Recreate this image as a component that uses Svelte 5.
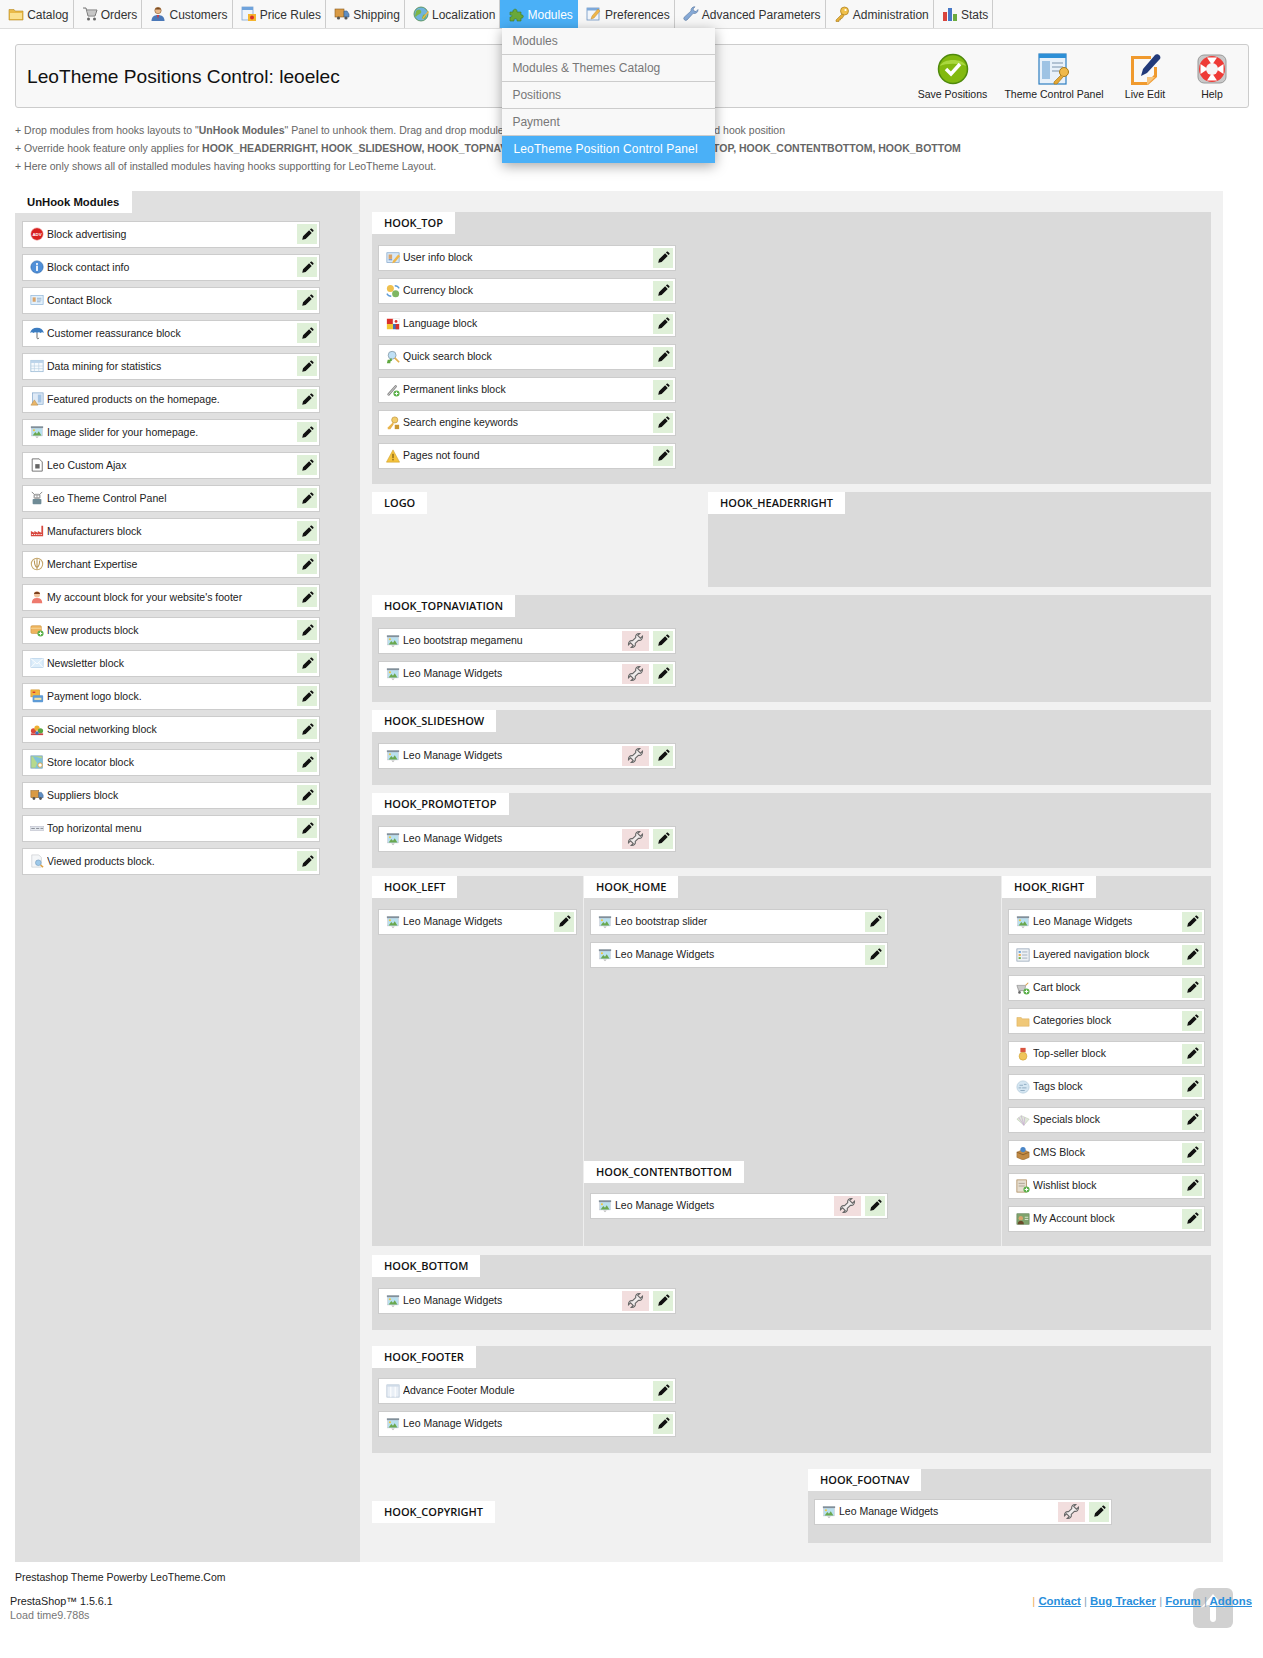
<script>
  const icons = {
    folder: '<path d="M1 3.500h5l1.200 1.500H15v9H1z" fill="#e9b949" stroke="#b98a22" stroke-width=".6"/><path d="M2 7h12v6H2z" fill="#fbe08f"/>',
    cart: '<path d="M1 2h3l2 8h7l2-6H5" fill="#e4e4e4" stroke="#777" stroke-width="1"/><path d="M6 6h8M6 8h7" stroke="#999" stroke-width=".8"/><circle cx="6.500" cy="13" r="1.500" fill="#666"/><circle cx="12.500" cy="13" r="1.500" fill="#666"/>',
    customer: '<circle cx="8" cy="4.500" r="3.200" fill="#e8b98c" stroke="#8a5a2c" stroke-width=".6"/><path d="M5 3.500c1-2.500 5-2.500 6 0z" fill="#7a4a20"/><path d="M1.500 15c0-4 2.500-6 6.500-6s6.500 2 6.500 6z" fill="#4a78b8"/><path d="M7 9h2l-1 4z" fill="#d33"/>',
    price: '<rect x="1" y="1" width="11" height="13" fill="#eef4fb" stroke="#7da3cf" stroke-width=".8"/><rect x="1" y="1" width="11" height="3" fill="#6fa3dc"/><rect x="7" y="8" width="8" height="7" fill="#f5b52e"/><circle cx="11" cy="11.500" r="2" fill="#d9302a"/>',
    truck: '<rect x="1" y="3" width="9" height="8" fill="#d89a45" stroke="#8a5a1c" stroke-width=".6"/><path d="M10 5h3l2 3v3h-5z" fill="#5f8fc4" stroke="#3c5f88" stroke-width=".6"/><circle cx="4.500" cy="12" r="1.600" fill="#555"/><circle cx="12" cy="12" r="1.600" fill="#555"/>',
    globe: '<circle cx="8" cy="8" r="7" fill="#6fb3dd" stroke="#4f8a46" stroke-width=".8"/><path d="M3 5c2-2 4-2 5 0s-1 3-3 4-2 3-3 1zM10 9c2-1 4 0 3 2s-3 3-4 1z" fill="#7db646"/><path d="M9 14l1-3 5-6 1 1-5 6z" fill="#eab64a"/>',
    puzzle: '<path d="M2 6h3c-1-3 4-4 4-1 0 .5 0 1 0 1h4v3c3-1 3 4 0 3v3H9c1-3-4-3-3 0H2v-4c2 1 3-3 0-2z" fill="#69a83a" stroke="#3f7a22" stroke-width=".6"/>',
    pref: '<rect x="1" y="2" width="12" height="12" fill="#f2f6fb" stroke="#6d95c4" stroke-width=".8"/><rect x="1" y="2" width="12" height="2.500" fill="#7ea9da"/><path d="M5 13l1-3 6-7 2 2-6 7z" fill="#efb64a" stroke="#b2802a" stroke-width=".4"/>',
    wrenchb: '<path d="M15 3.500a3.600 3.600 0 0 1-4.800 3.800L4 14a2 2 0 0 1-2.800-2.800L8 5A3.600 3.600 0 0 1 12 .8L10 3l1 2 2 .6z" fill="#86a9d6" stroke="#55759f" stroke-width=".6"/>',
    key: '<circle cx="10.500" cy="5" r="4" fill="#f0c04a" stroke="#a87a18" stroke-width=".7"/><circle cx="11.500" cy="4" r="1.100" fill="#fff"/><path d="M8 8l-6 6v1.500h3V14h1.500v-1.500H8l2-3z" fill="#e5b03a" stroke="#a87a18" stroke-width=".6"/>',
    stats: '<rect x="1" y="6" width="4" height="9" fill="#d9443c"/><rect x="6" y="2" width="4" height="13" fill="#4778c6"/><rect x="11" y="8" width="4" height="7" fill="#6cab3f"/>',
    adv: '<circle cx="8" cy="8" r="7" fill="#d8201f" stroke="#e7807f" stroke-width=".6"/><text x="8" y="10" font-size="5" font-family="Liberation Sans" font-weight="700" fill="#fff" text-anchor="middle">ADV</text>',
    info: '<circle cx="8" cy="8" r="7" fill="#4f8fd8" stroke="#2d68ad" stroke-width=".8"/><circle cx="8" cy="4.500" r="1.200" fill="#fff"/><rect x="7" y="6.500" width="2" height="6" fill="#fff"/>',
    contact: '<rect x="1" y="3" width="14" height="10" fill="#e3f0fb" stroke="#8cb4d8" stroke-width=".8"/><rect x="3" y="5" width="3.500" height="5" fill="#d9a36a"/><path d="M8 6h5M8 8h5M8 10h4" stroke="#7d9cbb" stroke-width=".8"/>',
    umbrella: '<path d="M0 8c1-4 4-6 8-6s7 2 8 6c-1-1-3-1-4 0-1-1-3-1-4 0-1-1-3-1-4 0-1-1-3-1-4 0z" fill="#3c7cc0"/><path d="M8 8v5.500c0 1.500 2 1.500 2 0" fill="none" stroke="#555" stroke-width="1"/>',
    table: '<rect x="1" y="1.500" width="14" height="13" fill="#f6fafd" stroke="#8fb2d0" stroke-width=".8"/><rect x="1" y="1.500" width="14" height="3" fill="#bcd4ea"/><path d="M1 8h14M1 11h14M5 4.500v10M10 4.500v10" stroke="#b7cfe3" stroke-width=".7"/>',
    featured: '<rect x="3" y="1" width="12" height="13" fill="#dfeaf6" stroke="#7ea3c9" stroke-width=".8"/><rect x="9" y="3" width="4" height="9" fill="#a5c4e4"/><path d="M1 15l4-6 4 6z" fill="#e9b66a" stroke="#b07f33" stroke-width=".5"/>',
    slider: '<rect x="1" y="1.500" width="14" height="2" fill="#7d8c96"/><rect x="2" y="3.500" width="12" height="9" fill="#b9e0ee" stroke="#aab" stroke-width=".4"/><path d="M3 12l3-4 2 2 2-3 3 5z" fill="#6aa84f"/><circle cx="4.500" cy="6" r="1.200" fill="#f2c53d"/><path d="M6 13h4l-2 2z" fill="#bbb"/>',
    ajax: '<path d="M2.500 1h8l3.500 3.500V15h-11.500z" fill="#fff" stroke="#555" stroke-width=".9"/><rect x="6" y="7" width="5" height="5" fill="#666"/>',
    robot: '<rect x="4" y="3" width="8" height="6" rx="2" fill="#aaa"/><path d="M2 1l3 3M14 1l-3 3" stroke="#777"/><rect x="3" y="9" width="10" height="6" rx="1" fill="#6f8b96"/><circle cx="6.500" cy="6" r="1" fill="#fff"/><circle cx="9.500" cy="6" r="1" fill="#fff"/>',
    factory: '<path d="M1 14V8l4 2V8l4 2V8l4 2V2h2v12z" fill="#d8483f"/><path d="M2 12h12" stroke="#fff" stroke-dasharray="1.500 1" stroke-width="1"/>',
    merchant: '<circle cx="8" cy="8" r="6.500" fill="none" stroke="#c5a76d" stroke-width="1.200"/><path d="M8 2v12M5 4c0 5 1 7 3 8 2-1 3-3 3-8" fill="none" stroke="#b89555" stroke-width="1.200"/>',
    girl: '<circle cx="8" cy="5" r="3.500" fill="#f0c49f"/><path d="M4.500 4.500C5 1 11 1 11.500 4.500z" fill="#7a3f1d"/><path d="M2 15c0-4 2-6 6-6s6 2 6 6z" fill="#ee7a6e"/>',
    newbox: '<rect x="1" y="3" width="12" height="9" rx="1.500" fill="#eeb45e" stroke="#c58c36" stroke-width=".6"/><path d="M1 6h12" stroke="#f9dc9e"/><circle cx="12" cy="12" r="3.500" fill="#5bb04a"/><path d="M10 12h4M12 10v4" stroke="#fff" stroke-width="1.100"/>',
    mail: '<rect x="1" y="3" width="14" height="10" fill="#dcedfa" stroke="#a9c9e5" stroke-width=".7"/><path d="M1 3l7 6 7-6M1 13l5-5M15 13l-5-5" fill="none" stroke="#fff" stroke-width="1"/>',
    payment: '<rect x="1" y="1" width="10" height="8" fill="#f3b63f" stroke="#c98d20" stroke-width=".6"/><rect x="3" y="3" width="3" height="1.500" fill="#d9302a"/><rect x="3" y="7" width="12" height="8" rx="1" fill="#5e9bd6"/><rect x="5" y="10" width="8" height="2.500" fill="#f2e2a5"/>',
    social: '<circle cx="4" cy="10" r="3" fill="#d9483b"/><circle cx="8" cy="7" r="3" fill="#eeb032"/><circle cx="12" cy="10" r="3" fill="#5aa640"/><path d="M1 14h14" stroke="#c44" stroke-width="2"/><circle cx="8" cy="12.500" r="2" fill="#3e74bc"/>',
    map: '<rect x="1" y="1" width="13" height="14" fill="#b6d98d" stroke="#6e98c2" stroke-width=".8"/><path d="M3 1l5 8-2 6h8V4z" fill="#7fc2da"/><circle cx="11.500" cy="11.500" r="2.500" fill="#fff" stroke="#e0a23c"/>',
    menu: '<rect x="0" y="6" width="16" height="5" fill="#e4e8ee" stroke="#aab" stroke-width=".5"/><path d="M1.500 8.500h4M7 8.500h3.500M12 8.500h3" stroke="#7a7f88" stroke-width="1"/>',
    viewed: '<path d="M2 1h8l3 3v11H2z" fill="#f4f6f8" stroke="#c3c7cc" stroke-width=".7"/><circle cx="9.500" cy="10" r="3.200" fill="#9dc9ea" stroke="#6e96b9" stroke-width=".7"/><path d="M12 12.500l3 2.500" stroke="#e0a23c" stroke-width="1.500"/>',
    user: '<rect x="1" y="2" width="14" height="11" fill="#d8e8f7" stroke="#7ea3c9" stroke-width=".8"/><rect x="3" y="4" width="4" height="5" fill="#d9a36a"/><path d="M3 10h4" stroke="#4a78b8"/><path d="M7 14l1-3 6-7 2 2-6 7z" fill="#efb64a"/>',
    currency: '<circle cx="5" cy="5" r="4" fill="#efc04e"/><circle cx="11" cy="11" r="4" fill="#7fb661"/><path d="M10 2c3 0 4 1 5 3M6 14c-3 0-4-1-5-3" fill="none" stroke="#5e9bd6" stroke-width="1.500"/>',
    lang: '<rect x="1" y="2" width="7" height="6" fill="#d9302a"/><rect x="8" y="2" width="7" height="6" fill="#fff" stroke="#ddd" stroke-width=".5"/><circle cx="11.500" cy="5" r="1.600" fill="#d9302a"/><rect x="1" y="8" width="7" height="6" fill="#f3c632"/><rect x="8" y="8" width="7" height="6" fill="#3e6fb5"/><rect x="11" y="8" width="4" height="6" fill="#d9302a"/>',
    search: '<circle cx="7" cy="6" r="4.500" fill="#bfe0f5" stroke="#8aa0ad" stroke-width="1"/><path d="M10 9l5 5" stroke="#e3b04d" stroke-width="2"/><path d="M1 15l1-4h2l2-2 1 3-2 1v2z" fill="#5fa83f"/>',
    link: '<path d="M3 13l8-9" stroke="#888" stroke-width="3" stroke-linecap="round"/><path d="M3 13l8-9" stroke="#ddd" stroke-width="1" stroke-linecap="round"/><circle cx="12" cy="12" r="3.500" fill="#5bb04a"/><path d="M10 12h4M12 10v4" stroke="#fff" stroke-width="1.100"/>',
    keylock: '<circle cx="10" cy="4.500" r="3.500" fill="#f2cc6b" stroke="#b88b2a" stroke-width=".7"/><path d="M8 7l-6 6v2h3l4-6z" fill="#e9b44c"/><rect x="10" y="10" width="5" height="5" fill="#c99530"/>',
    warn: '<path d="M8 1l7.500 14H.5z" fill="#f5c33d" stroke="#c99a22" stroke-width=".6"/><rect x="7.300" y="5.500" width="1.400" height="5" fill="#7a5a10"/><rect x="7.300" y="11.500" width="1.400" height="1.500" fill="#7a5a10"/>',
    columns: '<rect x="1" y="1" width="14" height="14" fill="#e9eff6" stroke="#aebfd2" stroke-width=".8"/><path d="M5.500 1v14M10.500 1v14" stroke="#fff" stroke-width="1.200"/><rect x="1" y="1" width="14" height="2" fill="#cfdbe8"/>',
    layered: '<rect x="1" y="1" width="14" height="14" fill="#edf1f5" stroke="#8a9cb0" stroke-width=".8"/><rect x="3" y="3.500" width="2.500" height="2" fill="#5e9bd6"/><rect x="3" y="7" width="2.500" height="2" fill="#e9a23c"/><rect x="3" y="10.500" width="2.500" height="2" fill="#6cab3f"/><path d="M7 4.500h6M7 8h6M7 11.500h6" stroke="#9aa9b8"/>',
    cartadd: '<path d="M1 5h10l-1 6H3z" fill="#c9c9c9" stroke="#777" stroke-width=".6"/><path d="M11 5l3-3" stroke="#d9a04a" stroke-width="1.200"/><circle cx="4" cy="13" r="1.500" fill="#666"/><circle cx="12" cy="12" r="3.500" fill="#5bb04a"/><path d="M10 12h4M12 10v4" stroke="#fff" stroke-width="1.100"/>',
    cats: '<path d="M1 4h5l1 1.500h8V14H1z" fill="#f0c878" stroke="#d6a650" stroke-width=".5"/>',
    medal: '<path d="M5 1h6v5H5z" fill="#d9553f"/><circle cx="8" cy="10.500" r="4.500" fill="#f0c55a" stroke="#c79a2e" stroke-width=".6"/>',
    tags: '<circle cx="8" cy="8" r="7" fill="#d5e6f2" stroke="#a9c3d6" stroke-width=".7"/><path d="M4 6h4M9 5h3M3 9h3M7 9h5M5 12h5" stroke="#88a6bd" stroke-width="1"/>',
    specials: '<path d="M1 7l5-4 9 4-6 7z" fill="#dfe8d8" stroke="#b9c5ae" stroke-width=".6"/><path d="M6 3l3 11M3 5l6 9M10 5l-1 9" stroke="#c9a9d6" stroke-width=".8"/>',
    cms: '<path d="M1 7l7-3 7 3v6l-7 3-7-3z" fill="#c18a45" stroke="#8a5d26" stroke-width=".5"/><circle cx="8" cy="4" r="3" fill="#4a86c8"/><path d="M1 7l7 3 7-3" fill="none" stroke="#8a5d26"/>',
    wish: '<rect x="1" y="1" width="11" height="14" fill="#e5ddcf" stroke="#a5814f" stroke-width=".8"/><path d="M3 5h7M3 8h7" stroke="#a79e90"/><circle cx="12" cy="12" r="3.500" fill="#5bb04a"/><path d="M10 12h4M12 10v4" stroke="#fff" stroke-width="1.100"/>',
    account: '<rect x="1" y="2" width="14" height="12" fill="#7fa36d" stroke="#56784a" stroke-width=".6"/><circle cx="5.500" cy="7" r="2.500" fill="#d9a36a"/><path d="M2 14c0-3 2-4 3.500-4S9 11 9 14z" fill="#6a4a2a"/><path d="M10 6h4M10 8.500h4" stroke="#e8f0e0"/>'
  }

  const nav = [
    { t: 'Catalog', i: 'folder' }, { t: 'Orders', i: 'cart' }, { t: 'Customers', i: 'customer' },
    { t: 'Price Rules', i: 'price' }, { t: 'Shipping', i: 'truck' }, { t: 'Localization', i: 'globe' },
    { t: 'Modules', i: 'puzzle', active: true }, { t: 'Preferences', i: 'pref' },
    { t: 'Advanced Parameters', i: 'wrenchb' }, { t: 'Administration', i: 'key' }, { t: 'Stats', i: 'stats' }
  ]

  const submenu = ['Modules', 'Modules & Themes Catalog', 'Positions', 'Payment']

  const unhook = [
    ['Block advertising', 'adv'], ['Block contact info', 'info'], ['Contact Block', 'contact'],
    ['Customer reassurance block', 'umbrella'], ['Data mining for statistics', 'table'],
    ['Featured products on the homepage.', 'featured'], ['Image slider for your homepage.', 'slider'],
    ['Leo Custom Ajax', 'ajax'], ['Leo Theme Control Panel', 'robot'], ['Manufacturers block', 'factory'],
    ['Merchant Expertise', 'merchant'], ["My account block for your website's footer", 'girl'],
    ['New products block', 'newbox'], ['Newsletter block', 'mail'], ['Payment logo block.', 'payment'],
    ['Social networking block', 'social'], ['Store locator block', 'map'], ['Suppliers block', 'truck'],
    ['Top horizontal menu', 'menu'], ['Viewed products block.', 'viewed']
  ]

  const hookTop = [
    ['User info block', 'user'], ['Currency block', 'currency'], ['Language block', 'lang'],
    ['Quick search block', 'search'], ['Permanent links block', 'link'],
    ['Search engine keywords', 'keylock'], ['Pages not found', 'warn']
  ]

  const hookRight = [
    ['Leo Manage Widgets', 'slider'], ['Layered navigation block', 'layered'], ['Cart block', 'cartadd'],
    ['Categories block', 'cats'], ['Top-seller block', 'medal'], ['Tags block', 'tags'],
    ['Specials block', 'specials'], ['CMS Block', 'cms'], ['Wishlist block', 'wish'], ['My Account block', 'account']
  ]

  const widgets = ['Leo Manage Widgets', 'slider']
</script>

{#snippet row(item, override = false)}
  <div class="row">
    <svg class="mod-icon" viewBox="0 0 16 16">{@html icons[item[1]]}</svg>
    <span class="row-name">{item[0]}</span>
    {#if override}
      <span class="btn btn-red">
        <svg viewBox="0 0 16 16" class="wrench-icon"><path transform="translate(8 8) rotate(45) scale(1.050)" d="M-1.700 -2C-3.600 -3 -3.800 -5.500 -1.700 -7.200V-4.600H1.700V-7.200C3.800 -5.500 3.600 -3 1.700 -2V2C3.600 3 3.800 5.500 1.700 7.200V4.600H-1.700V7.200C-3.800 5.500 -3.600 3 -1.700 2Z" fill="#f0ecec" stroke="#666" stroke-width="1"/></svg>
      </span>
    {/if}
    <span class="btn btn-green">
      <svg viewBox="0 0 16 16" class="btn-icon"><path d="M1.500 14.500l1-4.200L10 2.800l3.200 3.200-7.500 7.500zM11 1.800l1-1c.4-.4 1-.4 1.400 0l1.800 1.800c.4.400.4 1 0 1.400l-1 1z" fill="#111"/></svg>
    </span>
  </div>
{/snippet}

<div class="page">
  <nav class="navbar">
    {#each nav as item}
      <div class="nav-item" class:active={item.active}>
        <svg class="nav-icon" viewBox="0 0 16 16">{@html icons[item.i]}</svg>
        <span class="nav-label">{item.t}</span>
        {#if item.active}
          <div class="submenu">
            {#each submenu as s}
              <div class="sub-item">{s}</div>
            {/each}
            <div class="sub-item current">LeoTheme Position Control Panel</div>
          </div>
        {/if}
      </div>
    {/each}
  </nav>

  <header class="page-head">
    <h1>LeoTheme Positions Control: leoelec</h1>
    <div class="toolbar">
      <div class="tool">
        <svg viewBox="0 0 32 32" class="tool-icon">
          <circle cx="16" cy="16" r="14.500" fill="#82b90f" stroke="#4f8a0c" stroke-width="1.500"/>
          <path d="M3 13c3-8 23-8 26 0-6-3-20-3-26 0z" fill="#a9d83e"/>
          <path d="M9 16l5 5 9-10" fill="none" stroke="#fff" stroke-width="3.500"/>
        </svg>
        <span>Save Positions</span>
      </div>
      <div class="tool">
        <svg viewBox="0 0 32 32" class="tool-icon">
          <rect x="1" y="1" width="27" height="30" fill="#e8f1fa" stroke="#2d7fc1" stroke-width="1.200"/>
          <rect x="1" y="1" width="27" height="4" fill="#2d8fd6"/>
          <rect x="4" y="8" width="8" height="18" fill="#9ec3e4"/>
          <path d="M14 10h11M14 14h11M14 18h7" stroke="#9fb3c6" stroke-width="1.500"/>
          <circle cx="26" cy="19" r="4.500" fill="#f0b94a" stroke="#a87a18"/>
          <path d="M23 22l-7 7v2h3l6-7" fill="#e5a835" stroke="#a87a18" stroke-width=".7"/>
        </svg>
        <span>Theme Control Panel</span>
      </div>
      <div class="tool">
        <svg viewBox="0 0 32 32" class="tool-icon">
          <path d="M2 3h20v3H5v23h13l7-7V14h3v10l-9 8H2z" fill="#f09a2e"/>
          <path d="M18 32v-8h8z" fill="#f7c47c"/>
          <path d="M12 23l2-7L26 2c1-1 4-1 5 1s0 3-1 4L18 20z" fill="#223a7a"/>
        </svg>
        <span>Live Edit</span>
      </div>
      <div class="tool">
        <svg viewBox="0 0 32 32" class="tool-icon">
          <rect x="2" y="2" width="28" height="28" rx="6" fill="#c9c9c9" stroke="#999"/>
          <circle cx="16" cy="16" r="13" fill="#ee3b36"/>
          <circle cx="16" cy="16" r="6" fill="#f5f5f5"/>
          <path d="M11 4.500l4 6h2l4-6zM11 27.500l4-6h2l4 6zM4.500 11l6 4v2l-6 4zM27.500 11l-6 4v2l6 4z" fill="#fff"/>
        </svg>
        <span>Help</span>
      </div>
    </div>
  </header>

  <div class="notes">
    <p>+ Drop modules from hooks layouts to "<b>UnHook Modules</b>" Panel to unhook them. Drag and drop modules from this panel or between hooks to selected hook position</p>
    <p>+ Override hook feature only applies for <b>HOOK_HEADERRIGHT, HOOK_SLIDESHOW, HOOK_TOPNAVIATION, HOOK_RIGHT, HOOK_PROMOTETOP, HOOK_CONTENTBOTTOM, HOOK_BOTTOM</b></p>
    <p>+ Here only shows all of installed modules having hooks supportting for LeoTheme Layout.</p>
  </div>

  <div class="main">
    <aside class="unhook">
      <div class="unhook-title">UnHook Modules</div>
      <div class="unhook-list">
        {#each unhook as m}
          {@render row(m)}
        {/each}
      </div>
    </aside>

    <section class="layout">
      <div class="hook">
        <div class="tab">HOOK_TOP</div>
        <div class="rows">
          {#each hookTop as m}
            {@render row(m)}
          {/each}
        </div>
      </div>

      <div class="split">
        <div class="logo-col"><div class="tab">LOGO</div></div>
        <div class="hook header-right"><div class="tab">HOOK_HEADERRIGHT</div></div>
      </div>

      <div class="hook">
        <div class="tab">HOOK_TOPNAVIATION</div>
        <div class="rows">
          {@render row(['Leo bootstrap megamenu', 'slider'], true)}
          {@render row(widgets, true)}
        </div>
      </div>

      <div class="hook hook-single">
        <div class="tab">HOOK_SLIDESHOW</div>
        <div class="rows">{@render row(widgets, true)}</div>
      </div>

      <div class="hook hook-single">
        <div class="tab">HOOK_PROMOTETOP</div>
        <div class="rows">{@render row(widgets, true)}</div>
      </div>

      <div class="columns">
        <div class="col col-left">
          <div class="tab">HOOK_LEFT</div>
          <div class="rows">{@render row(widgets)}</div>
        </div>
        <div class="col col-home">
          <div class="home-top">
            <div class="tab">HOOK_HOME</div>
            <div class="rows">
              {@render row(['Leo bootstrap slider', 'slider'])}
              {@render row(widgets)}
            </div>
          </div>
          <div class="tab">HOOK_CONTENTBOTTOM</div>
          <div class="rows rows-tight">{@render row(widgets, true)}</div>
        </div>
        <div class="col col-right">
          <div class="tab">HOOK_RIGHT</div>
          <div class="rows">
            {#each hookRight as m}
              {@render row(m)}
            {/each}
          </div>
        </div>
      </div>

      <div class="hook hook-bottom">
        <div class="tab">HOOK_BOTTOM</div>
        <div class="rows">{@render row(widgets, true)}</div>
      </div>

      <div class="hook hook-footer">
        <div class="tab">HOOK_FOOTER</div>
        <div class="rows rows-tight">
          {@render row(['Advance Footer Module', 'columns'])}
          {@render row(widgets)}
        </div>
      </div>

      <div class="split split-last">
        <div class="copyright"><div class="tab">HOOK_COPYRIGHT</div></div>
        <div class="hook footnav">
          <div class="tab">HOOK_FOOTNAV</div>
          <div class="rows">{@render row(widgets, true)}</div>
        </div>
      </div>
    </section>
  </div>

  <p class="powerby">Prestashop Theme Powerby LeoTheme.Com</p>

  <footer class="footer">
    <div class="version">
      <div>PrestaShop™ 1.5.6.1</div>
      <div class="load">Load time9.788s</div>
    </div>
    <div class="links">
      <span class="sep first">|</span> <a href="#top">Contact</a> <span class="sep">|</span> <a href="#top">Bug Tracker</a> <span class="sep">|</span> <a href="#top">Forum</a> <span class="sep">|</span> <a href="#top">Addons</a>
    </div>
  </footer>

  <div class="to-top">
    <svg viewBox="0 0 40 40" width="40" height="40"><path d="M20 6L8 20c4-2.500 7-3.500 9-3v14c0 4 6 4 6 0V17c2-.5 5 .5 9 3z" fill="#fff"/></svg>
  </div>
</div>

<style>
  :global(body) {
    margin: 0;
    background: #fff;
    font-family: "Liberation Sans", Arial, sans-serif;
  }
  .page {
    position: relative;
    height: 1658px;
    overflow: hidden;
  }

  .navbar {
    display: flex;
    height: 28px;
    background: #f8f8f8;
    border-bottom: 1px solid #ddd;
  }
  .nav-item {
    position: relative;
    display: flex;
    align-items: center;
    gap: 3.150px;
    padding: 0 4px 0 8px;
    font-size: 12px;
    color: #333;
    border-right: 1px solid #ccc;
    white-space: nowrap;
  }
  .nav-label {
    padding-top: 1px;
  }
  .nav-item.active {
    background: #4ab0f7;
    color: #fff;
    border-right-color: #4ab0f7;
  }
  .nav-icon {
    width: 16px;
    height: 16px;
    flex: none;
  }
  .submenu {
    position: absolute;
    top: 28px;
    left: 2px;
    width: 213px;
    background: #f8f8f8;
    box-shadow: 0 3px 12px rgba(0, 0, 0, 0.35);
    z-index: 5;
  }
  .sub-item {
    height: 26px;
    line-height: 26px;
    padding-left: 10px;
    color: #777;
    border-bottom: 1px solid #ccc;
  }
  .sub-item.current {
    height: 27px;
    line-height: 27px;
    border-bottom: 0;
    background: #4ab0f7;
    color: #fff;
    padding-left: 11px;
    letter-spacing: 0.16px;
  }

  .page-head {
    display: flex;
    align-items: center;
    justify-content: space-between;
    box-sizing: border-box;
    height: 64px;
    margin: 15px 14px 0 15px;
    padding: 0 6px 0 11px;
    background: #f8f8f8;
    border: 1px solid #ccc;
    border-radius: 3px;
  }
  h1 {
    margin: 1px 0 0;
    font-size: 19.150px;
    font-weight: 400;
    color: #111;
  }
  .toolbar {
    display: flex;
  }
  .tool {
    display: flex;
    flex-direction: column;
    align-items: center;
    box-sizing: border-box;
    font-size: 10.500px;
    color: #222;
    white-space: nowrap;
  }
  .tool:nth-child(1) { width: 95px; }
  .tool:nth-child(2) { width: 108px; }
  .tool:nth-child(3) { width: 74px; }
  .tool:nth-child(4) { width: 60px; }
  .tool-icon {
    width: 32px;
    height: 32px;
    margin-bottom: 3px;
  }

  .notes {
    margin: 13px 15px 0;
    font-size: 10.500px;
    line-height: 18px;
    color: #666;
  }
  .notes p {
    margin: 0;
    white-space: nowrap;
  }

  .main {
    display: flex;
    margin: 16px 40px 0 15px;
  }
  .unhook {
    width: 345px;
    flex: none;
    background: #e0e0e0;
  }
  .unhook-title {
    width: 117px;
    box-sizing: border-box;
    height: 22px;
    line-height: 22px;
    padding-left: 12px;
    background: #fff;
    font-size: 11.300px;
    font-weight: 700;
    color: #111;
  }
  .unhook-list {
    padding: 8px 7px 0;
  }

  .layout {
    flex: 1;
    min-width: 0;
    background: #f1f1f1;
    padding: 21px 12px 19px;
    display: flex;
    flex-direction: column;
    gap: 8px;
  }
  .hook {
    box-sizing: border-box;
    background: #dadada;
    padding-bottom: 8px;
  }
  .hook-single {
    padding-bottom: 9px;
  }
  .tab {
    width: fit-content;
    height: 22px;
    line-height: 22px;
    padding: 0 12px;
    background: #fff;
    font-family: "Open Sans", "Liberation Sans", sans-serif;
    font-size: 11px;
    font-weight: 600;
    color: #111;
    white-space: nowrap;
  }
  .rows {
    padding: 11px 6px 0;
  }
  .rows-tight {
    padding-top: 10px;
  }

  .row {
    display: flex;
    align-items: center;
    box-sizing: border-box;
    width: 298px;
    max-width: 100%;
    height: 27px;
    margin-bottom: 6px;
    padding: 0 2px 1px 7px;
    background: #fff;
    border: 1px solid #ccc;
    font-size: 10.500px;
    color: #222;
  }
  .layout .row {
    height: 26px;
    margin-bottom: 7px;
  }
  .mod-icon {
    width: 14px;
    height: 14px;
    flex: none;
    margin-right: 3px;
  }
  .row-name {
    flex: 1;
    margin-top: -1px;
    white-space: nowrap;
    overflow: hidden;
  }
  .btn {
    display: flex;
    align-items: center;
    justify-content: center;
    height: 20px;
  }
  .btn-green {
    width: 20px;
    background: #dff0d8;
  }
  .btn-red {
    width: 27px;
    margin-right: 4px;
    background: #f2dede;
  }
  .btn-icon {
    width: 13px;
    height: 13px;
  }
  .wrench-icon {
    width: 17px;
    height: 17px;
  }

  .split {
    display: flex;
  }
  .logo-col {
    width: 336px;
    flex: none;
  }
  .header-right {
    flex: 1;
    height: 95px;
  }

  .columns {
    display: flex;
    height: 370px;
    background: #dadada;
    margin-bottom: 1px;
  }
  .col {
    box-sizing: border-box;
    min-width: 0;
  }
  .col-left {
    width: 211px;
  }
  .col-home {
    display: flex;
    flex-direction: column;
    width: 418px;
    border-left: 1px solid #eee;
  }
  .home-top {
    height: 285px;
  }
  .col-right {
    width: 210px;
    border-left: 1px solid #eee;
  }

  .hook-bottom {
    height: 75px;
  }
  .hook-footer {
    margin-top: 8px;
    height: 107px;
  }
  .split-last {
    justify-content: space-between;
    margin-top: 8px;
  }
  .copyright {
    padding-top: 32px;
  }
  .footnav {
    width: 403px;
    height: 74px;
    padding-bottom: 0;
  }
  .footnav .rows {
    padding-top: 8px;
  }

  .powerby {
    margin: 8px 15px 0;
    font-size: 10.500px;
    line-height: 14px;
    color: #222;
  }
  .footer {
    display: flex;
    justify-content: space-between;
    margin: 10px 11px 0 10px;
    font-size: 10.750px;
    line-height: 14px;
    color: #222;
  }
  .load {
    color: #777;
  }
  .links {
    position: relative;
    z-index: 2;
    font-size: 11.400px;
    font-weight: 700;
  }
  .links a {
    color: #2a8fdc;
  }
  .sep {
    color: #8aa4bb;
    font-weight: 400;
  }
  .sep.first {
    color: #f0ad60;
  }
  .to-top {
    position: absolute;
    left: 1193px;
    top: 1588px;
    width: 40px;
    height: 40px;
    border-radius: 6px;
    background: rgba(190, 190, 190, 0.7);
  }
</style>
